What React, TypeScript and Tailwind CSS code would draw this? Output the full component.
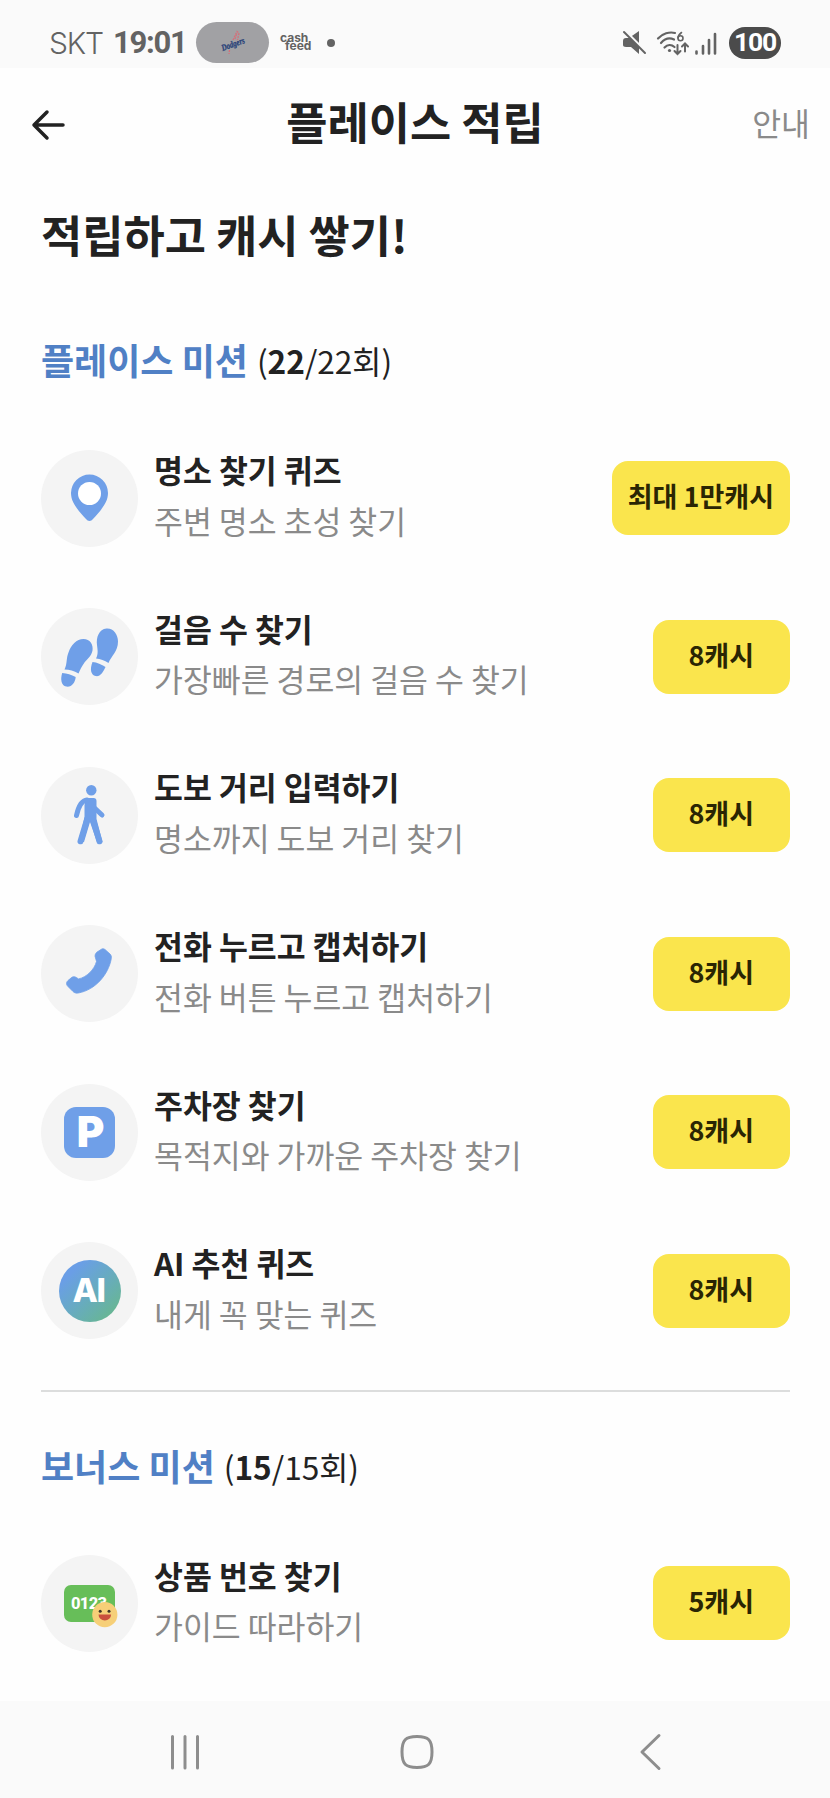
import { ReactNode } from 'react';

interface Mission {
  title: string;
  description: string;
  reward: string;
  icon: ReactNode;
}

function PinIcon() {
  return (
    <svg width="97" height="97" viewBox="0 0 97 97">
      <path
        d="M48.500 71c-1.400 0-2.500-.7-3.500-1.900C38.500 61.500 30 53.500 30 43a18.500 18.500 0 0 1 37 0C67 53.500 58.500 61.500 52 69.100c-1 1.200-2.100 1.900-3.500 1.900z"
        fill="#6f9fe8"
      />
      <circle cx="48.500" cy="43.500" r="11.500" fill="#fff" />
    </svg>
  );
}

function FootprintsIcon() {
  return (
    <svg width="97" height="97" viewBox="0 0 97 97" fill="#6f9fe8">
      <path d="M23.500 61.500c3-6 1.500-11 4-17 2.500-7.500 8-13.500 15-13.500 6.500 0 10 5.500 9 11.500-1 6-6 9-9 13.500-2 3-3.500 6-5 9.500-4.500-2.500-9-4-14-4z" />
      <path d="M21.200 65c5 .3 9 1.800 13.500 4-.5 6-4.500 10.500-9.500 9.500-5-1-6-7-4-13.500z" />
      <path d="M55 50.500c2.500-5 1.500-8.500 1-13.500-1-7.500 2-16 9.500-16.500 7-.5 11.500 6 11.500 13 0 10-6.500 14-9.500 21.500-4-2.500-8-4-12.500-4.500z" />
      <path d="M51.500 54c4.500.5 9 2.300 13 5-2.500 5.500-5.500 10-10 9-4.500-1-6-6.500-3-14z" />
    </svg>
  );
}

function WalkingIcon() {
  return (
    <svg width="97" height="97" viewBox="0 0 97 97" fill="none" stroke="#6f9fe8" strokeLinecap="round" strokeLinejoin="round">
      <circle cx="50.300" cy="23.300" r="5.200" fill="#6f9fe8" stroke="none" />
      <path d="M45 31h7.500c2 0 3 1 3 3v18l6 23h-5.500L49 55l-6 20h-5l5.500-25V38z" fill="#6f9fe8" stroke="none" />
      <path d="M46 33c-5 .5-8.500 6-10.500 15.500M53 40.500l8 7.500" strokeWidth="5" />
      <path d="M46.500 51l-7 23.300M51.500 51l7 23.300" strokeWidth="6" />
    </svg>
  );
}

function PhoneIcon() {
  return (
    <svg width="97" height="97" viewBox="0 0 97 97">
      <path
        d="M60 24.500c1.200-1 2.700-1 4 0l5 4.500c1.200 1.200 1.600 2.700 1.300 4.500-2.800 16-16 31.500-33 34.500-2 .4-3.800 0-5.300-1.500l-5-5c-2-2-2-4 0-6l3-2.500c1.700-1.700 3.500-1.700 5.500-.4l2 1.300c8-1.500 16-9.500 18-17.500l-1-3.500c-1-2.300-.3-4 1.300-5.700z"
        fill="#6f9fe8"
        stroke="#6f9fe8"
        strokeWidth=".8"
      />
    </svg>
  );
}

function ParkingIcon() {
  return (
    <div className="flex h-[51px] w-[51px] items-center justify-center rounded-[12px] bg-[#6f9fe8] pl-0.5 font-[Inter] text-[42px] leading-none font-black text-white">
      P
    </div>
  );
}

function AiIcon() {
  return (
    <div className="flex h-[62px] w-[62px] items-center justify-center rounded-full bg-linear-to-br from-[#6a9ee6] from-20% to-[#68b596] to-85% pr-0.5 font-[Inter] text-[33px] leading-none font-extrabold tracking-[-1.500px] text-white">
      AI
    </div>
  );
}

function NumberIcon() {
  return (
    <svg width="97" height="97" viewBox="0 0 97 97">
      <rect x="23" y="30" width="51" height="37" rx="7" fill="#67be59" />
      <text x="30" y="53.500" fontFamily="Roboto, sans-serif" fontSize="16.500" fontWeight="800" textLength="36" fill="#fff">
        0123
      </text>
      <circle cx="63.800" cy="59.700" r="12.600" fill="#f6cf78" />
      <circle cx="59.200" cy="56.300" r="1.500" fill="#3d3527" />
      <circle cx="68" cy="56.300" r="1.500" fill="#3d3527" />
      <path d="M57.500 59.500h12.600a6.300 6 0 0 1-12.600 0z" fill="#c94f3d" />
    </svg>
  );
}

const placeMissions: Mission[] = [
  { title: '명소 찾기 퀴즈', description: '주변 명소 초성 찾기', reward: '최대 1만캐시', icon: <PinIcon /> },
  { title: '걸음 수 찾기', description: '가장빠른 경로의 걸음 수 찾기', reward: '8캐시', icon: <FootprintsIcon /> },
  { title: '도보 거리 입력하기', description: '명소까지 도보 거리 찾기', reward: '8캐시', icon: <WalkingIcon /> },
  { title: '전화 누르고 캡처하기', description: '전화 버튼 누르고 캡처하기', reward: '8캐시', icon: <PhoneIcon /> },
  { title: '주차장 찾기', description: '목적지와 가까운 주차장 찾기', reward: '8캐시', icon: <ParkingIcon /> },
  { title: 'AI 추천 퀴즈', description: '내게 꼭 맞는 퀴즈', reward: '8캐시', icon: <AiIcon /> },
];

const bonusMissions: Mission[] = [
  { title: '상품 번호 찾기', description: '가이드 따라하기', reward: '5캐시', icon: <NumberIcon /> },
];

function StatusBar() {
  return (
    <div className="flex h-[68px] shrink-0 items-center bg-[#fafafa] pt-[17px] pr-[49px] pl-[49px] font-[Roboto] text-[#636363]">
      <span className="w-[64px] font-[Inter] text-[30px] leading-none font-light tracking-[-1.200px]">SKT</span>
      <span className="w-[83px] text-[31px] leading-none font-bold tracking-[-1.300px]">19:01</span>
      <div className="flex h-[41px] w-[73px] items-center justify-center rounded-full bg-[#a1a1a4]">
        <svg className="overflow-visible" width="36" height="36" viewBox="-4 -4 36 36">
          <path d="M14 11l4-8.500 2 1.500-1.500 7M16 10l2-6M10.500 21l-.5 4" stroke="#d4707a" strokeWidth="1.300" strokeDasharray="2 1" fill="none" />
          <text x="2" y="18" fontFamily="Liberation Serif, serif" fontSize="9" fontStyle="italic" fontWeight="700" textLength="24" lengthAdjust="spacingAndGlyphs" transform="rotate(-20 14 15)" fill="#263f78" stroke="#263f78" strokeWidth=".3">
            Dodgers
          </text>
        </svg>
      </div>
      <p className="ml-[11px] w-[34px] pb-px font-[Inter] text-[12px] leading-[8.500px] font-bold">
        cash
        <br />
        <span className="pl-[5px]">feed</span>
      </p>
      <div className="ml-[13px] h-2 w-2 rounded-full bg-[#636363]" />
      <svg className="mr-[11px] ml-auto" width="96" height="26" viewBox="0 0 96 26" fill="none" stroke="#636363" strokeLinecap="round">
        <path d="M1 11c0-2 1-3 3-3h3l10-7v23l-8-7H4c-2 0-3-1-3-2z" fill="#636363" stroke="none" />
        <path d="M3.500 1.500L25 23" stroke="#fafafa" strokeWidth="3" />
        <path d="M2 2l21 21" strokeWidth="2" />
        <path d="M36 8.500c4.500-5 11.500-7 17-5.500M39 13c3.500-4 8.500-5.500 13-3.500M42.500 17.500c3-3 7-3 10-.5" strokeWidth="2.200" />
        <circle cx="47.500" cy="20.500" r="1.600" fill="#636363" stroke="none" />
        <path d="M59.500 2.500c-2 1.500-3.500 3.500-3.500 5.500" strokeWidth="1.600" />
        <circle cx="58.500" cy="8.200" r="2.500" strokeWidth="1.600" />
        <path d="M55.500 15v9m-3-3l3 3 3-3M63 21.500v-8m-3 3l3-3 3 3" strokeWidth="2" />
        <path d="M74.500 21.500v2M81 16v7.500M87 10v13.500M93 4v19.500" strokeWidth="2.600" />
      </svg>
      <div className="flex h-8 w-[52px] items-center justify-center rounded-full bg-[#4b4b4b] text-[26.500px] leading-none font-bold tracking-[-1.200px] text-white">
        100
      </div>
    </div>
  );
}

function Header() {
  return (
    <header className="grid h-[112px] shrink-0 grid-cols-[1fr_auto_1fr] items-center pr-[20px] pl-[31px]">
      <svg className="mt-[2px]" width="36" height="32" viewBox="0 0 36 32" fill="none" stroke="#222" strokeWidth="3.500" strokeLinecap="round" strokeLinejoin="round">
        <path d="M32 16H3M16 3L3 16l13 13" />
      </svg>
      <h1 className="mr-[11px] pb-[5px] text-[44.800px] leading-none font-bold">플레이스 적립</h1>
      <button className="justify-self-end pb-[3px] text-[31.400px] leading-none text-[#8a8a8a]">안내</button>
    </header>
  );
}

function SectionTitle({ name, done, total }: { name: string; done: number; total: number }) {
  return (
    <h3 className="flex items-baseline text-[31.600px] leading-[48px] font-normal">
      <span className="mr-[9px] text-[36px] font-bold text-[#5080c5]">{name}</span>
      <span className="-translate-y-px">
        (<b className="font-bold">{done}</b>/{total}회)
      </span>
    </h3>
  );
}

function MissionRow({ title, description, reward, icon }: Mission) {
  return (
    <li className="flex h-[97px] items-center">
      <div className="flex h-[97px] w-[97px] shrink-0 items-center justify-center rounded-full bg-[#f4f4f4]">{icon}</div>
      <div className="ml-[16px] flex-1 pb-[4.500px] text-[31.400px] leading-[50.500px] whitespace-nowrap">
        <p className="font-bold">{title}</p>
        <p className="text-[#8a8a8a]">{description}</p>
      </div>
      <button className="flex h-[74px] min-w-[137.500px] items-center justify-center rounded-[16px] bg-[#fae54d] px-4 pb-[5px] text-[27px] leading-none font-bold text-[#2a2503]">
        {reward}
      </button>
    </li>
  );
}

function NavigationBar() {
  return (
    <nav className="flex h-[97px] shrink-0 items-center bg-[#fafafa] pt-1 pl-[168px] text-[#8d8d8d]">
      <svg width="34" height="40" viewBox="0 0 34 40" fill="none" stroke="currentColor" strokeWidth="3" strokeLinecap="round">
        <path d="M4.500 4.500v31.500M17 4.500v31.500M29.500 4.500v31.500" />
      </svg>
      <svg className="ml-[196px]" width="38" height="40" viewBox="0 0 38 40" fill="none" stroke="currentColor" strokeWidth="3">
        <path d="M19 4.500c11.500 0 15 3.500 15 15.500s-3.500 15.500-15 15.500S4 32 4 20 7.500 4.500 19 4.500z" />
      </svg>
      <svg className="ml-[200px]" width="30" height="40" viewBox="0 0 30 40" fill="none" stroke="currentColor" strokeWidth="3" strokeLinecap="round" strokeLinejoin="round">
        <path d="M23 3.500L6 20l17 16.500" />
      </svg>
    </nav>
  );
}

export default function App() {
  return (
    <div className="flex h-[1798px] w-[830px] flex-col overflow-hidden bg-[#fefefe] font-['Noto_Sans_CJK_KR',sans-serif] text-[#222]">
      <StatusBar />
      <Header />
      <main className="flex-1 pr-[40px] pl-[41px]">
        <h2 className="pt-[22px] text-[44.800px] leading-[64px] font-bold">적립하고 캐시 쌓기!</h2>
        <div className="pt-[69px]">
          <SectionTitle name="플레이스 미션" done={22} total={22} />
        </div>
        <ul className="flex flex-col gap-[61.600px] pt-[64.500px]">
          {placeMissions.map((mission) => (
            <MissionRow key={mission.title} {...mission} />
          ))}
        </ul>
        <hr className="mt-[50.500px] border-t-2 border-[#dcdddd]" />
        <div className="pt-[49px]">
          <SectionTitle name="보너스 미션" done={15} total={15} />
        </div>
        <ul className="pt-[64px]">
          {bonusMissions.map((mission) => (
            <MissionRow key={mission.title} {...mission} />
          ))}
        </ul>
      </main>
      <NavigationBar />
    </div>
  );
}
